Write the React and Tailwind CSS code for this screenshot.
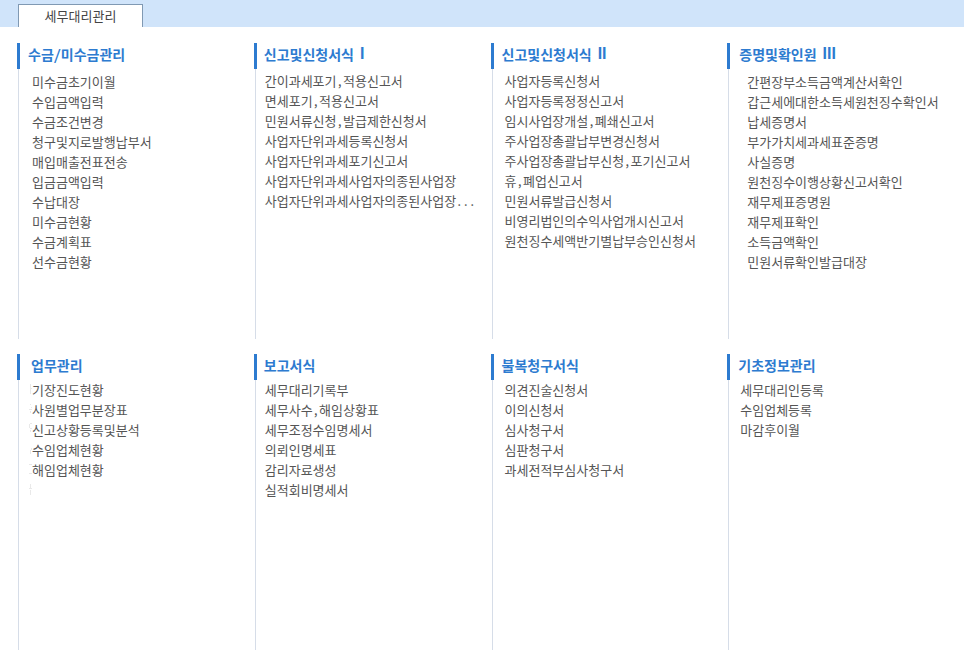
import React from "react";

const sections = [
  {
    title: "수금/미수금관리",
    headPad: "pl-2",
    listPad: "pl-[13px] pt-[3px]",
    items: ["미수금초기이월", "수입금액입력", "수금조건변경", "청구및지로발행납부서", "매입매출전표전송", "입금금액입력", "수납대장", "미수금현황", "수금계획표", "선수금현황"],
  },
  {
    title: "신고및신청서식",
    numeral: "I",
    headPad: "pl-[7px]",
    listPad: "pl-[9px] pt-0.5",
    items: ["간이과세포기,적용신고서", "면세포기,적용신고서", "민원서류신청,발급제한신청서", "사업자단위과세등록신청서", "사업자단위과세포기신고서", "사업자단위과세사업자의종된사업장", "사업자단위과세사업자의종된사업장..."],
  },
  {
    title: "신고및신청서식",
    numeral: "II",
    headPad: "pl-2",
    listPad: "pl-3 pt-0.5",
    items: ["사업자등록신청서", "사업자등록정정신고서", "임시사업장개설,폐쇄신고서", "주사업장총괄납부변경신청서", "주사업장총괄납부신청,포기신고서", "휴,폐업신고서", "민원서류발급신청서", "비영리법인의수익사업개시신고서", "원천징수세액반기별납부승인신청서"],
  },
  {
    title: "증명및확인원",
    numeral: "III",
    headPad: "pl-[9px]",
    listPad: "pl-[18px] pt-[3px]",
    items: ["간편장부소득금액계산서확인", "갑근세에대한소득세원천징수확인서", "납세증명서", "부가가치세과세표준증명", "사실증명", "원천징수이행상황신고서확인", "재무제표증명원", "재무제표확인", "소득금액확인", "민원서류확인발급대장"],
  },
  {
    title: "업무관리",
    headPad: "pl-[11px]",
    listPad: "pl-[13px]",
    marks: true,
    items: ["기장진도현황", "사원별업무분장표", "신고상황등록및분석", "수임업체현황", "해임업체현황"],
  },
  {
    title: "보고서식",
    headPad: "pl-[7px]",
    listPad: "pl-[9px]",
    items: ["세무대리기록부", "세무사수,해임상황표", "세무조정수임명세서", "의뢰인명세표", "감리자료생성", "실적회비명세서"],
  },
  {
    title: "불복청구서식",
    headPad: "pl-2",
    listPad: "pl-3",
    items: ["의견진술신청서", "이의신청서", "심사청구서", "심판청구서", "과세전적부심사청구서"],
  },
  {
    title: "기초정보관리",
    headPad: "pl-2",
    listPad: "pl-[11px]",
    items: ["세무대리인등록", "수임업체등록", "마감후이월"],
  },
];

function FaintMarks() {
  return (
    <svg className="absolute left-[10px] top-0 h-[120px] w-[3px]" viewBox="0 0 3 120" fill="#e9e9e9" aria-hidden="true">
      <path d="M1 4h1v10h-1zM2 8h1v1h-1zM1 24h1v1h-1zM2 27h1v1h-1zM0 29h3v1h-3zM1 31h1v2h-1zM0 44h1v4h-1zM1 43h2v1h-2zM1 48h2v1h-2zM1 50h1v2h-1zM2 68h1v2h-1zM1 70h1v4h-1zM0 84h3v1h-3zM0 93h3v1h-3zM1 104h1v4h-1zM0 108h3v1h-3zM1 110h1v5h-1z" />
    </svg>
  );
}

function Section({ title, numeral, items, headPad, listPad, marks }) {
  return (
    <section className="flex min-h-[296px] min-w-0 flex-col">
      <h2 className={`flex h-[26px] items-center gap-1.5 border-l-[3px] border-[#2d7bd0] pb-1 text-sm font-bold leading-5 text-[#2d7bd0] ${headPad}`}>
        {title}
        {numeral && <span className="font-['Liberation_Sans',sans-serif] text-base leading-5">{numeral}</span>}
      </h2>
      <div className="relative ml-px flex-1 border-l border-[#d6dde8]">
        {marks && <FaintMarks />}
        <ul className={listPad}>
          {items.map((item) => (
            <li key={item} className="h-5 whitespace-nowrap leading-5">
              <a href="#" className="hover:underline">{item}</a>
            </li>
          ))}
        </ul>
      </div>
    </section>
  );
}

export default function App() {
  return (
    <div className="min-h-screen bg-white pb-4 font-['Noto_Sans_Mono_CJK_KR','Noto_Sans_CJK_KR',sans-serif] text-[13px] text-[#555555]">
      <nav className="flex h-[27px] items-end bg-[#d0e4fa] pl-[18px]">
        <button type="button" className="h-[23px] w-[125px] border border-b-0 border-[#8099b3] bg-white leading-5 text-[#444444]">
          세무대리관리
        </button>
      </nav>
      <main className="grid grid-cols-4 gap-y-[15px] pl-[17px] pt-4">
        {sections.map((section) => (
          <Section key={section.title + (section.numeral ?? "")} {...section} />
        ))}
      </main>
    </div>
  );
}
